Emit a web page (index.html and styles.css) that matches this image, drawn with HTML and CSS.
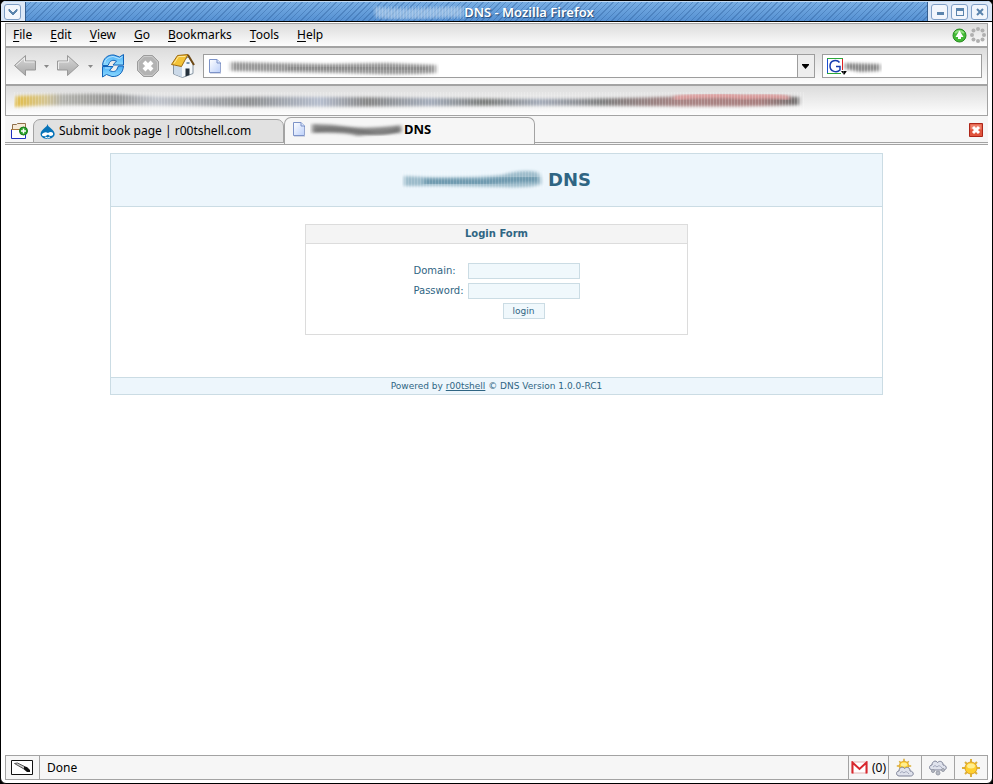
FILE: index.html
```html
<!DOCTYPE html>
<html lang="en">
<head>
<meta charset="utf-8">
<title>DNS - Mozilla Firefox</title>
<link rel="stylesheet" href="styles.css">
</head>
<body>
<svg class="defs" aria-hidden="true">
  <defs>
    <pattern id="ridge" width="3" height="20" patternUnits="userSpaceOnUse"><rect width="1" height="20" fill="#fff" opacity=".25"/></pattern>
    <filter id="soft" x="-5%" y="-50%" width="110%" height="200%"><feGaussianBlur stdDeviation="2 1.500"/></filter>
    <linearGradient id="sheet" x1="0" y1="0" x2="1" y2="1"><stop offset="0" stop-color="#fff"/><stop offset="1" stop-color="#bcd0fa"/></linearGradient>
    <linearGradient id="gray" x1="0" y1="0" x2="0" y2="1"><stop offset="0" stop-color="#d8d8d8"/><stop offset="1" stop-color="#a8a8a8"/></linearGradient>
    <linearGradient id="blue" x1="0" y1="0" x2="0" y2="1"><stop offset="0" stop-color="#4aaef6"/><stop offset="1" stop-color="#8fdcff"/></linearGradient>
    <linearGradient id="marks" x1="0" x2="1"><stop offset="0" stop-color="#e3bd47"/><stop offset=".04" stop-color="#d5c591"/><stop offset=".06" stop-color="#b4b4ae"/><stop offset=".13" stop-color="#959595"/><stop offset=".18" stop-color="#c0c4cc"/><stop offset=".3" stop-color="#8f9193"/><stop offset=".39" stop-color="#b7bfcf"/><stop offset=".45" stop-color="#868686"/><stop offset=".53" stop-color="#a7afbd"/><stop offset=".6" stop-color="#7c7e7c"/><stop offset=".67" stop-color="#a6adba"/><stop offset=".75" stop-color="#808080"/><stop offset=".85" stop-color="#a98585"/><stop offset=".95" stop-color="#a98080"/><stop offset="1" stop-color="#707070"/></linearGradient>
    <symbol id="page-icon" viewBox="0 0 12 15"><path d="M.5.5h7.500l3.500 3.500v9.500H.5z" fill="url(#sheet)" stroke="#7d93c8"/><path d="M8 .5V4h3.500" fill="#dce6fc" stroke="#7d93c8"/><path d="M1 14.500h11V5" fill="none" stroke="#c5cbdc" opacity=".7"/></symbol>
    <symbol id="cloud" viewBox="0 0 18 12"><path d="M3 11C-.5 10.500 0 6 3 6c0-4 4-5 5.500-2.500C11 1 14.500 3 14 6c4 0 4.500 5 .5 5z" fill="#dfe2ec" stroke="#7c8196"/><path d="M4 8q2-3 4 0q2-3 5 1" fill="none" stroke="#a4a9bc"/></symbol>
    <symbol id="sun" viewBox="0 0 20 20"><g stroke="#dcb03a" stroke-width="2"><path d="M10 1v18M1 10h18M4 4l12 12M16 4L4 16"/></g><circle cx="10" cy="10" r="6" fill="#ffcf2e" stroke="#dba12a"/><ellipse cx="10" cy="8" rx="4" ry="2.500" fill="#ffee90"/></symbol>
  </defs>
</svg>
<div class="window">
  <header class="titlebar">
    <div class="caps"><button class="cap" aria-label="Window menu"><svg width="10" height="8"><path d="M1 1l4 4 4-4v2L5 7 1 3z" fill="#5a84ad" stroke="#5a84ad"/></svg></button></div>
    <div class="caption">
      <svg width="91" height="18" aria-hidden="true"><path d="M1 4q15 2 28 2t30-1 31-1v10q-15 0-31 1t-34 1T2 13z" fill="#b5d0ec" opacity=".6" filter="url(#soft)"/><path d="M1 3h90v13H1z" fill="url(#ridge)" opacity=".7"/></svg>
      <span>DNS - Mozilla Firefox</span>
    </div>
    <div class="caps end">
      <button class="cap" aria-label="Minimize"><svg width="8" height="8"><path d="M1 4h7v3H1z" fill="#5a84ad"/></svg></button>
      <button class="cap" aria-label="Maximize"><svg width="8" height="8"><path d="M0 0h8v8H0zM1 3v4h6V3z" fill="#5a84ad" fill-rule="evenodd"/></svg></button>
      <button class="cap" aria-label="Close"><svg width="8" height="8"><path d="M1 1l6 6M7 1L1 7" stroke="#5a84ad" stroke-width="2"/></svg></button>
    </div>
  </header>

  <div class="chrome">
    <nav class="bar menubar">
      <button><u>F</u>ile</button><button><u>E</u>dit</button><button><u>V</u>iew</button><button><u>G</u>o</button><button><u>B</u>ookmarks</button><button><u>T</u>ools</button><button><u>H</u>elp</button>
      <div class="menu-end">
        <svg width="15" height="15"><circle cx="7.500" cy="7.500" r="6.500" fill="#42ba35" stroke="#278a20"/><path d="M3 5q4-4 9 0" stroke="#91df80" stroke-width="2" fill="none"/><path d="M7.500 2.500L11.500 9H9v2H6V9H3.500z" fill="#fff"/></svg>
        <svg width="16" height="16" fill="#b0b0b0"><circle cx="8" cy="2" r="2"/><circle cx="12.500" cy="3.500" r="2"/><circle cx="14" cy="8" r="2"/><circle cx="12.500" cy="12.500" r="2"/><circle cx="8" cy="14" r="2"/><circle cx="3.500" cy="12.500" r="2"/><circle cx="2" cy="8" r="2"/><circle cx="3.500" cy="3.500" r="2"/></svg>
      </div>
    </nav>

    <div class="bar toolbar">
      <button class="tool" aria-label="Back"><svg width="24" height="24"><path d="M1.500 11.500L12.500 1.500v5.500h10v9h-10v5.500z" fill="url(#gray)" stroke="#999"/><path d="M3 11.500l8.500-7.500V8h10" fill="none" stroke="#eee"/></svg></button>
      <button class="drop" aria-label="Back history"><svg width="5" height="3"><path d="M0 0h5L2.500 3z" fill="#888"/></svg></button>
      <button class="tool" aria-label="Forward"><svg width="24" height="24"><path d="M22.500 11.500L11.500 1.500v5.500h-10v9h10v5.500z" fill="url(#gray)" stroke="#999"/><path d="M2.500 15V8h10V4" fill="none" stroke="#eee"/></svg></button>
      <button class="drop wide" aria-label="Forward history"><svg width="5" height="3"><path d="M0 0h5L2.500 3z" fill="#888"/></svg></button>
      <button class="tool" aria-label="Reload"><svg width="24" height="24"><path d="M1.500 11.500C2 4 7 .5 13 1l5.500 2L22.500.5v10.500H12l3.500-4C12 5.500 9 6.500 8 9.500l-1 2z" fill="url(#blue)" stroke="#1263b8"/><path d="M22.500 12C22 19.500 17 23 11 22.500L5.500 20.500l-4 2.500V12.500H12L8.500 16.500c4 2 7 1 8-2.500l1-2z" fill="url(#blue)" stroke="#1263b8"/><path d="M3.500 9Q5 3 12 2.500l6.500 2 3-2M4 14h5" fill="none" stroke="#b9e5ff"/></svg></button>
      <button class="tool stop" aria-label="Stop"><svg width="24" height="24"><path d="M7.500 1.500h9l6 6v9l-6 6h-9l-6-6v-9z" fill="#b3b3b3" stroke="#9c9c9c"/><path d="M8 2.500h8l5.500 5.500v8L16 21.500H8L2.500 16V8z" fill="none" stroke="#ccc"/><path d="M8 8l8 8M16 8l-8 8" stroke="#fff" stroke-width="4"/></svg></button>
      <button class="tool" aria-label="Home"><svg width="24" height="24"><path d="M2.500 11v9l9 3.500 10.500-4V10L17.500 3z" fill="#f4f8fb" stroke="#8795a3"/><path d="M3 12v8l8 3V12z" fill="#cbd9e8"/><path d="M14.500 14.500h4v6.500l-4 1.500z" fill="#25313c"/><path d="M15.500 9h3" stroke="#7894ad" stroke-width="2"/><path d="M.5 10.500L6.500 1.500 17 .5 10.500 12.500z" fill="#f3c338" stroke="#9d6a12"/><path d="M3 9.500l4.500-7h7" fill="none" stroke="#ffe797"/><path d="M17 1l6 10" stroke="#6e4914" stroke-width="2"/></svg></button>
      <div class="address">
        <div class="field">
          <svg class="page" width="12" height="15"><use href="#page-icon"/></svg>
          <input type="text" aria-label="Location">
          <svg class="smudge" width="212" height="22" aria-hidden="true"><path d="M4 6l45 1 50 1 60-1 50 2v8q-30 2-60 1t-95-2L4 15z" fill="#9a9a9a" filter="url(#soft)"/><path d="M60 12q60-1 140 1" stroke="#858585" stroke-width="3" fill="none" filter="url(#soft)"/><path d="M1 3h210v17H1z" fill="url(#ridge)"/></svg>
        </div>
        <button class="history" aria-label="Show history"><svg width="7" height="5"><path d="M0 0h7v1L3.500 5 0 1z"/></svg></button>
      </div>
      <div class="field search">
        <svg width="20" height="19"><path d="M.5 17V1" stroke="#1b4fd0"/><path d="M0 1.500h16M0 16.500h14" stroke="#2ca83a"/><path d="M15.500 2v11" stroke="#d22"/><path d="M12.500 5.500C10 2 3 3 3 9s7 7 10 4V9.500H9" fill="none" stroke="#173dae" stroke-width="1.500"/><path d="M14 14h6l-3 4z"/></svg>
        <input type="text" aria-label="Search">
        <svg class="smudge" width="40" height="22" aria-hidden="true"><path d="M2 7l35 1v7l-20 1L2 13z" fill="#8e8e8e" filter="url(#soft)"/><path d="M0 3h40v16H0z" fill="url(#ridge)"/></svg>
      </div>
    </div>

    <div class="bar bookmarks">
      <svg width="792" height="22" aria-hidden="true"><path d="M2 6Q80 2 115 5t100 2 210 1 220-1 140 0v8q-70 2-140 1t-230 0-220 0-80-1-55 0-60 2z" fill="url(#marks)" filter="url(#soft)"/><path d="M660 8Q700 4 730 7q30-2 45 1" fill="none" stroke="#df9c9c" stroke-width="4" filter="url(#soft)"/><path d="M0 2h790v18H0z" fill="url(#ridge)" opacity=".8"/></svg>
    </div>

    <div class="tabs">
      <button class="newtab" aria-label="New tab"><svg width="17" height="17"><path d="M1.500 8V2.500h4l1-1h8V8z" fill="#f6ead8" stroke="#8f6f4a"/><path d="M.5 8v8.500h14V8" fill="#fff" stroke="#1e31c0"/><path d="M0 7.500h14" stroke="#a8783f"/><circle cx="12.500" cy="9" r="4" fill="#29a32b" stroke="#147817"/><path d="M12.500 6.500v5M10 9h5" stroke="#fff" stroke-width="1.500"/></svg></button>
      <button class="tab">
        <svg width="15" height="17"><path d="M7.500 1q0 2 3 4c8 6 3 11-3 11S-3 11 4.500 5q3-2 3-4z" fill="#0773b8"/><path d="M2 11q3-3 6-1 3-2 5 0v2q-3 2-5-.5-3 3-6 1z" fill="#fff"/><path d="M5 14q3 2 5 0" stroke="#fff" fill="none"/></svg>
        <span>Submit book page | r00tshell.com</span>
      </button>
      <button class="tab active">
        <svg width="12" height="15"><use href="#page-icon"/></svg>
        <svg class="ink" width="94" height="17" aria-hidden="true"><path d="M2 3q20 0 40 3 18 2 49-2v8q-30 1-43 3-12-4-46-3z" fill="#888" filter="url(#soft)"/><path d="M5 9q25-2 47 2t38-3" stroke="#666" stroke-width="2" fill="none" filter="url(#soft)"/></svg>
        <span>DNS</span>
      </button>
      <button class="closetab" aria-label="Close tab"><svg width="14" height="14"><path d="M.5.5h13v13H.5z" fill="#e0543d" stroke="#ad2518"/><path d="M1.500 1.500h11v5h-11z" fill="#ee806b"/><path d="M4 4l6 6M10 4l-6 6" stroke="#fff" stroke-width="3"/></svg></button>
    </div>

    <main class="view">
      <div class="site">
        <h1><svg width="142" height="24" aria-hidden="true"><path d="M2 8l20 1q50 1 78-2 20-6 35-3 4 2 4 12-8 4-37 3l-60-1L2 18z" fill="#9dbccb" filter="url(#soft)"/><path d="M22 14h60q25-3 54-3" stroke="#5c8ba3" stroke-width="6" fill="none" opacity=".7" filter="url(#soft)"/><path d="M0 3h142v18H0z" fill="url(#ridge)" opacity=".6"/></svg><span>DNS</span></h1>
        <form class="login">
          <h2>Login Form</h2>
          <div class="fields">
            <label for="domain">Domain:</label><input id="domain" type="text">
            <label for="password">Password:</label><input id="password" type="password">
            <button type="button">login</button>
          </div>
        </form>
        <footer>Powered by <a href="#">r00tshell</a> © DNS Version 1.0.0-RC1</footer>
      </div>
    </main>

    <div class="status">
      <div class="cell"><svg width="22" height="16"><path d="M.5.500h21v14H.5z" fill="#fff" stroke="#111"/><path d="M3.500 3.500l3-.5 8 4-1.500 2z" fill="#ccc" stroke="#555"/><path d="M13 6.500l3 .5 3 3v2h-3l-3-2.500z" fill="#111"/></svg></div>
      <div class="cell done">Done</div>
      <div class="cell"><svg width="17" height="13"><path d="M1 1h15v11H1z" fill="#fff" stroke="#e6b3b3"/><path d="M1.500 12.500v-11l7 6.500 7-6.500v11" fill="none" stroke="#d8272d" stroke-width="2"/></svg><span>(0)</span></div>
      <div class="cell weather"><svg width="20" height="20"><use href="#sun" x="1" y="0" width="16" height="16"/><use href="#cloud" x="1" y="7" width="18" height="12"/></svg></div>
      <div class="cell weather"><svg width="20" height="20"><use href="#cloud" x="1" y="1" width="18" height="12"/><g fill="#b6bac4" stroke="#999da8"><circle cx="5" cy="13" r="1.500"/><circle cx="10" cy="15" r="2"/><circle cx="15" cy="12" r="1.500"/></g></svg></div>
      <div class="cell weather"><svg width="20" height="20"><use href="#sun" width="20" height="20"/></svg></div>
    </div>
  </div>
</div>
</body>
</html>
```

FILE: styles.css
```css
* { box-sizing: border-box; }
body {
  margin: 0;
  background: #000;
  color: #000;
  font: 12px/18px "Noto Sans", "Open Sans", sans-serif;
}
button, input { margin: 0; padding: 0; border: 0; background: none; font: inherit; color: inherit; }
input:focus { outline: none; }
svg { display: block; flex: none; }
.defs { position: absolute; width: 0; height: 0; }

.window {
  display: flex;
  flex-direction: column;
  min-height: 100vh;
  border: 1px solid #000;
  border-radius: 6px;
  background: #fff;
  overflow: hidden;
}
.titlebar {
  display: flex;
  height: 21px;
  border-top: 1px solid #c4daf2;
  border-bottom: 1px solid #000;
  background: #dce8f7;
}
.caps { display: flex; align-items: center; gap: 3px; padding: 0 4px 0 3px; }
.cap {
  display: grid;
  place-items: center;
  width: 17px;
  height: 16px;
  border: 1px solid #7f9fc6;
  border-radius: 3px;
  background: #f2f6fc;
}
.caption {
  flex: 1;
  display: flex;
  align-items: center;
  justify-content: center;
  border: solid #345f92;
  border-width: 0 1px;
  background:
    repeating-linear-gradient(135deg, transparent 0 3px, #2d5f9c66 3px 4px),
    linear-gradient(#78aee4, #5590d2);
  color: #fff;
  font-size: 13px;
  font-weight: 600;
  text-shadow: 1px 1px 1px #234a78;
}
.caption svg { margin-left: 14px; }

.chrome { flex: 1; display: flex; flex-direction: column; margin: 1px 4px 3px; }
.bar {
  display: flex;
  align-items: center;
  border: 1px solid #a3a3a3;
  border-bottom-width: 2px;
  border-top: 0;
  background: linear-gradient(#dcdcdc, #fdfdfd);
}
.menubar { height: 25px; padding: 0 1px 0 7px; gap: 18px; border-top: 1px solid #a3a3a3; }
.menubar u { text-underline-offset: 2px; }
.menu-end { display: flex; align-items: center; gap: 3px; margin-left: auto; }
.toolbar { height: 38px; padding: 0 5px 0 6px; }
.tool { padding: 0 1px; }
.drop { padding: 0 6px; }
.drop.wide { padding: 0 7px; }
.stop { margin: 0 9px; }
.address { flex: 1; display: flex; margin: 0 7px; }
.field {
  position: relative;
  flex: 1;
  display: flex;
  align-items: center;
  height: 24px;
  padding: 0 4px;
  border: 1px solid #9d9d9d;
  background: #fff;
}
.field input { flex: 1; min-width: 0; }
.page { margin-left: 1px; }
.smudge { position: absolute; left: 23px; top: 1px; }
.search { flex: none; width: 16.5%; min-width: 120px; }
.search .smudge { left: 20px; }
.history { display: grid; place-items: center; width: 17px; border: 1px solid #9d9d9d; border-left: 0; background: #eee; }
.bookmarks { height: 30px; padding: 0 8px; border-bottom-width: 1px; }

.tabs {
  display: flex;
  align-items: flex-end;
  height: 29px;
  border-bottom: 1px solid #a3a3a3;
  background: linear-gradient(#f6f6f6 0 26px, #a3a3a3 26px 27px, #f6f6f6 27px);
}
.newtab { align-self: center; padding: 0 5px 0 6px; }
.tab {
  display: flex;
  align-items: center;
  gap: 4px;
  width: 251px;
  height: 24px;
  margin-bottom: 1px;
  padding: 0 6px;
  border: 1px solid #a3a3a3;
  border-radius: 7px 7px 0 0;
  background: #e1e1e1;
  white-space: nowrap;
}
.tab.active { height: 27px; margin-bottom: 0; padding: 0 8px 4px; border-bottom: 0; background: #f6f6f6; font-size: 13px; font-weight: 700; }
.ink { margin-left: 1px; margin-right: -4px; }
.closetab { align-self: center; margin-left: auto; padding-right: 5px; }

.view { flex: 1; padding-top: 8px; background: #fff; }
.site {
  width: 78.7%;
  margin: 0 auto;
  border: 1px solid #cbdce4;
  color: #2f6583;
  font-family: "DejaVu Sans", sans-serif;
}
h1 {
  display: flex;
  align-items: center;
  justify-content: center;
  gap: 4px;
  height: 53px;
  margin: 0;
  border-bottom: 1px solid #cbdce4;
  background: #edf6fc;
  font-size: 18px;
}
.login { width: 49.6%; margin: 17px auto 42px; border: 1px solid #dcdcdc; }
h2 { margin: 0; border-bottom: 1px solid #dcdcdc; background: #f4f4f4; font-size: 10px; line-height: 18px; text-align: center; }
.fields {
  display: grid;
  grid-template-columns: auto 112px;
  justify-content: center;
  align-items: center;
  gap: 4px;
  padding: 19px 0 15px;
  font-size: 10px;
  line-height: 16px;
}
.fields input { height: 16px; border: 1px solid #cbdce4; background: #f0f8fc; }
.fields button {
  grid-column: 2;
  justify-self: center;
  width: 42px;
  height: 16px;
  border: 1px solid #cbdce4;
  background: #f0f8fc;
  font-size: 9px;
  line-height: 14px;
}
footer { border-top: 1px solid #cbdce4; background: #edf6fc; font-size: 9px; line-height: 16px; text-align: center; }
footer a { color: inherit; }

.status { display: flex; height: 25px; border: 1px solid #a3a3a3; border-right: 0; background: #f6f6f6; }
.cell { display: flex; align-items: center; gap: 4px; padding: 0 2px; border-right: 1px solid #a3a3a3; }
.cell:first-child { padding: 0 6px 0 5px; }
.done { flex: 1; padding-left: 7px; }
.weather { width: 33px; justify-content: center; padding: 0; }
```
